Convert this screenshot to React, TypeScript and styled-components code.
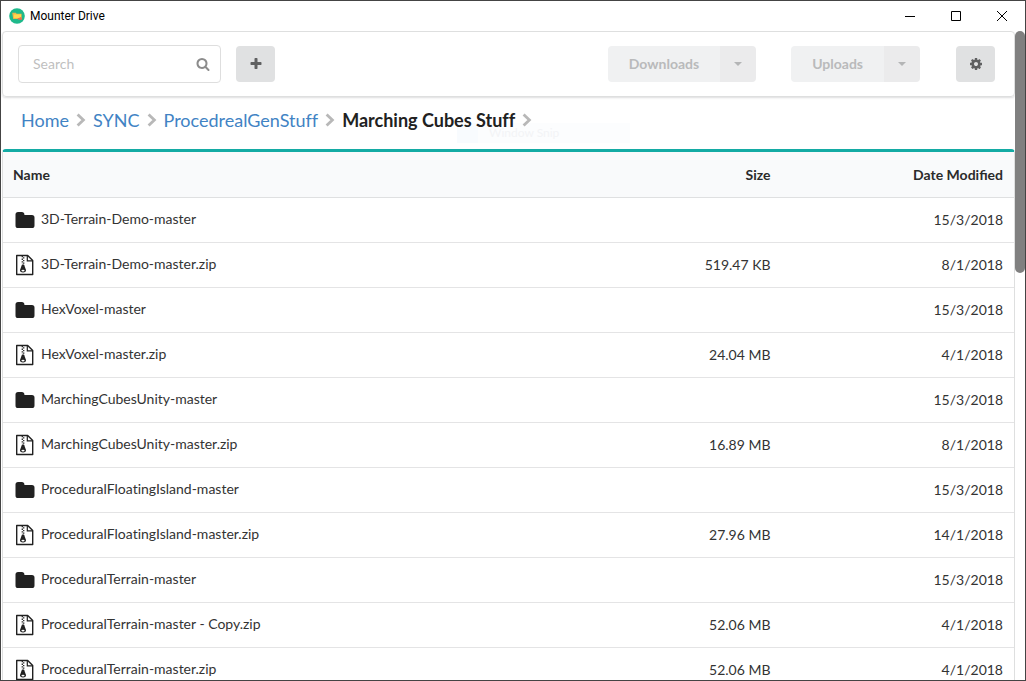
import React from "react";
import styled, { createGlobalStyle } from "styled-components";

const GlobalStyle = createGlobalStyle`
  *, *::before, *::after { box-sizing: border-box; }
  body {
    margin: 0;
    background: #fff;
    color: #212121;
    font-family: Lato, "Helvetica Neue", Arial, sans-serif;
    font-size: 14px;
    line-height: 18px;
  }
  button, input { font: inherit; }
`;

const Window = styled.div`
  display: flex;
  flex-direction: column;
  height: 100vh;
  border: 1px solid #444;
  overflow: hidden;
`;

const TitleBar = styled.header`
  display: flex;
  align-items: center;
  flex: none;
  height: 30px;
  padding-left: 8px;
  gap: 5px;
  color: #000;
`;

const WindowTitle = styled.h1`
  flex: 1;
  margin: 0;
  font: 400 12px/16px Roboto, "Open Sans", sans-serif;
`;

const WindowControls = styled.div`
  display: flex;
`;

const WindowButton = styled.button`
  display: flex;
  align-items: center;
  justify-content: center;
  width: 46px;
  height: 30px;
  padding: 0;
  border: 0;
  background: none;
  color: #000;
`;

const Viewport = styled.div`
  display: flex;
  flex: 1;
  min-height: 0;
`;

const Content = styled.main`
  flex: 1;
  min-width: 0;
  padding-left: 1px;
  overflow: hidden;
`;

const ScrollTrack = styled.div`
  flex: none;
  width: 10px;
`;

const ScrollThumb = styled.div`
  height: 242px;
  border-radius: 5px;
  background: #808080;
`;

const Toolbar = styled.div`
  display: flex;
  align-items: center;
  height: 66px;
  padding: 0 19px 0 15px;
  border: 1px solid #dedfdf;
  border-radius: 4px;
  box-shadow: 0 1px 2px rgba(34, 36, 38, 0.15);
`;

const SearchBox = styled.label`
  display: flex;
  align-items: center;
  width: 203px;
  height: 38px;
  margin-right: 15px;
  padding: 0 10px 0 14px;
  border: 1px solid #dedede;
  border-radius: 4px;
  color: #8c8c8c;
`;

const SearchInput = styled.input`
  flex: 1;
  min-width: 0;
  padding: 0;
  border: 0;
  outline: 0;
  background: none;
  color: #212121;
  &::placeholder { color: #bfbfbf; opacity: 1; }
`;

const IconButton = styled.button`
  display: flex;
  align-items: center;
  justify-content: center;
  width: 39px;
  height: 36px;
  padding: 0;
  border: 0;
  border-radius: 4px;
  background: #e0e1e2;
  color: #5f6061;
`;

const Transfers = styled.div`
  display: flex;
  gap: 35px;
  margin: 0 36px 0 auto;
`;

const SplitButton = styled.div`
  display: flex;
  height: 36px;
  border-radius: 4px;
  overflow: hidden;
`;

const SplitMain = styled.button`
  padding: 0 21px;
  border: 0;
  background: #f0f1f2;
  color: #b9babb;
  font-weight: 700;
`;

const SplitArrow = styled.button`
  display: flex;
  align-items: center;
  justify-content: center;
  width: 36px;
  padding: 0;
  border: 0;
  background: #ebebec;
  color: #b4b5b6;
`;

const Breadcrumb = styled.nav`
  position: relative;
  isolation: isolate;
  display: flex;
  align-items: center;
  height: 52px;
  padding: 0 19px 6px;
  gap: 7px;
  font-size: 18px;
  font-variant-ligatures: none;
  line-height: 24px;
  color: #212121;
`;

const Crumb = styled.a`
  color: #4183c4;
  text-decoration: none;
`;

const CurrentCrumb = styled.span`
  font-weight: 700;
`;

const SnipGhost = styled.div`
  position: absolute;
  z-index: -1;
  top: 26px;
  left: 455px;
  display: flex;
  align-items: center;
  width: 173px;
  height: 20px;
  background: #fcfdfe;
  color: #f3f4f6;
  font-size: 12px;
  line-height: 20px;
  &::before {
    content: "";
    width: 21px;
    height: 20px;
    margin-right: 11px;
    background: #f8fbfe;
  }
`;

const FileTable = styled.table`
  width: 100%;
  table-layout: fixed;
  border: 1px solid #dedfdf;
  border-top: 3px solid #14aba4;
  border-radius: 4px 4px 0 0;
  border-collapse: separate;
  border-spacing: 0;
`;

const HeadCell = styled.th<{ $width?: string; $right?: boolean }>`
  width: ${(p) => p.$width ?? "auto"};
  height: 46px;
  padding: 0 11px 0 10px;
  border-bottom: 1px solid #dfe0e1;
  background: #f9fafb;
  color: #2b2b2b;
  font-weight: 700;
  text-align: ${(p) => (p.$right ? "right" : "left")};
`;

const Cell = styled.td<{ $right?: boolean }>`
  height: 45px;
  padding: 0 11px 0 12px;
  border-bottom: 1px solid #e4e4e5;
  color: #333;
  font-variant-ligatures: none;
  text-align: ${(p) => (p.$right ? "right" : "left")};
`;

const FileName = styled.div`
  display: flex;
  align-items: center;
  gap: 6px;
`;

const FileLabel = styled.span`
  padding-bottom: 2px;
`;

const paths = {
  search:
    "M1216 832q0-185-131.5-316.5t-316.5-131.5-316.5 131.5-131.5 316.5 131.5 316.5 316.5 131.5 316.5-131.5 131.5-316.5zm512 832q0 52-38 90t-90 38q-54 0-90-38l-343-342q-179 124-399 124-143 0-273.5-55.5t-225-150-150-225-55.5-273.5 55.5-273.5 150-225 225-150 273.5-55.5 273.5 55.5 225 150 150 225 55.5 273.5q0 220-124 399l343 343q37 37 37 90z",
  plus:
    "M1600 736v192q0 40-28 68t-68 28h-416v416q0 40-28 68t-68 28h-192q-40 0-68-28t-28-68v-416h-416q-40 0-68-28t-28-68v-192q0-40 28-68t68-28h416v-416q0-40 28-68t68-28h192q40 0 68 28t28 68v416h416q40 0 68 28t28 68z",
  cog:
    "M1152 896q0-106-75-181t-181-75-181 75-75 181 75 181 181 75 181-75 75-181zm512-109v222q0 12-8 23t-20 13l-185 28q-19 54-39 91 35 50 107 138 10 12 10 25t-9 23q-27 37-99 108t-94 71q-12 0-26-9l-138-108q-44 23-91 38-16 136-29 186-7 28-36 28h-222q-14 0-24.5-8.5t-11.5-21.5l-28-184q-49-16-90-37l-141 107q-10 9-25 9-14 0-25-11-126-114-165-168-7-10-7-23 0-12 8-23 15-21 51-66.5t54-70.5q-27-50-41-99l-183-27q-13-2-21-12.5t-8-23.5v-222q0-12 8-23t19-13l186-28q14-46 39-92-40-57-107-138-10-12-10-24 0-10 9-23 26-36 98.5-107.5t94.5-71.5q13 0 26 10l138 107q44-23 91-38 16-136 29-186 7-28 36-28h222q14 0 24.5 8.5t11.5 21.5l28 184q49 16 90 37l142-107q9-9 24-9 13 0 25 10 129 119 165 170 7 8 7 22 0 12-8 23-15 21-51 66.5t-54 70.5q26 50 41 98l183 28q13 2 21 12.5t8 23.5z",
};

const Glyph = ({ name, size }: { name: keyof typeof paths; size: number }) => (
  <svg width={size} height={size} viewBox="0 0 1792 1792" fill="currentColor" aria-hidden="true">
    <path d={paths[name]} />
  </svg>
);

const Chevron = () => (
  <svg width="10" height="14" viewBox="0 0 10 14" fill="none" stroke="#b8b8b8" strokeWidth="2.8" aria-hidden="true">
    <path d="M1.600 1.400 7.400 7l-5.800 5.600" />
  </svg>
);

const Caret = () => (
  <svg width="8" height="4" viewBox="0 0 8 4" fill="currentColor" aria-hidden="true">
    <path d="M0 0h8L4 4z" />
  </svg>
);

const FolderIcon = () => (
  <svg width="20" height="18" viewBox="0 0 20 18" fill="#212121" aria-hidden="true">
    <path d="M.5 3.600A2.600 2.600 0 0 1 3.100 1h3.700a2.600 2.600 0 0 1 2.600 2.600V4h7.500a2.600 2.600 0 0 1 2.600 2.600v7.800a2.600 2.600 0 0 1-2.600 2.600H3.100a2.600 2.600 0 0 1-2.600-2.600z" />
  </svg>
);

const ZipIcon = () => (
  <svg width="20" height="22" viewBox="0 0 20 22" fill="none" stroke="#212121" aria-hidden="true">
    <path strokeWidth="1.400" strokeLinejoin="round" d="M1.700 1.500h11l5 5v14h-16z" />
    <path strokeWidth="1.200" d="M12.300 1.700v5.100h5.200" />
    <path strokeWidth="1.300" strokeDasharray="1.300 1.300" d="M7.300 2v8M8.700 3.300v8" />
    <path fill="#212121" stroke="none" d="M7 10.500h2l1.900 5.300c.6 1.700-1 2.800-2.900 2.800s-3.500-1.100-2.900-2.800z" />
    <ellipse cx="8" cy="16.600" rx="1.600" ry=".9" fill="#fff" stroke="none" />
  </svg>
);

const AppLogo = () => (
  <svg width="16" height="16" viewBox="0 0 16 16" aria-hidden="true">
    <circle cx="8" cy="8" r="7.800" fill="#1eb98b" />
    <path d="M3.200 4.800h3.600l.8.900h5v5.300H4.200z" fill="#f3b448" />
    <path d="M4.800 6.400h7.200v3.600H4.800z" fill="#ffd84f" />
    <path d="M8.500 10h2.200V8.800L13 10v1.800H9.500z" fill="#ec6f50" />
  </svg>
);

const crumbs = ["Home", "SYNC", "ProcedrealGenStuff"];

const files = [
  { name: "3D-Terrain-Demo-master", size: "", date: "15/3/2018" },
  { name: "3D-Terrain-Demo-master.zip", size: "519.47 KB", date: "8/1/2018" },
  { name: "HexVoxel-master", size: "", date: "15/3/2018" },
  { name: "HexVoxel-master.zip", size: "24.04 MB", date: "4/1/2018" },
  { name: "MarchingCubesUnity-master", size: "", date: "15/3/2018" },
  { name: "MarchingCubesUnity-master.zip", size: "16.89 MB", date: "8/1/2018" },
  { name: "ProceduralFloatingIsland-master", size: "", date: "15/3/2018" },
  { name: "ProceduralFloatingIsland-master.zip", size: "27.96 MB", date: "14/1/2018" },
  { name: "ProceduralTerrain-master", size: "", date: "15/3/2018" },
  { name: "ProceduralTerrain-master - Copy.zip", size: "52.06 MB", date: "4/1/2018" },
  { name: "ProceduralTerrain-master.zip", size: "52.06 MB", date: "4/1/2018" },
];

const TransferButton = ({ label }: { label: string }) => (
  <SplitButton>
    <SplitMain disabled>{label}</SplitMain>
    <SplitArrow disabled aria-label={`${label} menu`}>
      <Caret />
    </SplitArrow>
  </SplitButton>
);

export default function App() {
  return (
    <>
      <GlobalStyle />
      <Window>
        <TitleBar>
          <AppLogo />
          <WindowTitle>Mounter Drive</WindowTitle>
          <WindowControls>
            <WindowButton aria-label="Minimize">
              <svg width="10" height="10" viewBox="0 0 10 10" stroke="currentColor">
                <path d="M0 5.500h10" />
              </svg>
            </WindowButton>
            <WindowButton aria-label="Maximize">
              <svg width="10" height="10" viewBox="0 0 10 10" fill="none" stroke="currentColor">
                <path d="M.5.5h9v9h-9z" />
              </svg>
            </WindowButton>
            <WindowButton aria-label="Close">
              <svg width="10" height="10" viewBox="0 0 10 10" stroke="currentColor">
                <path d="m0 0 10 10M10 0 0 10" />
              </svg>
            </WindowButton>
          </WindowControls>
        </TitleBar>
        <Viewport>
          <Content>
            <Toolbar>
              <SearchBox>
                <SearchInput type="text" placeholder="Search" aria-label="Search" />
                <Glyph name="search" size={14} />
              </SearchBox>
              <IconButton aria-label="Add">
                <Glyph name="plus" size={14} />
              </IconButton>
              <Transfers>
                <TransferButton label="Downloads" />
                <TransferButton label="Uploads" />
              </Transfers>
              <IconButton aria-label="Settings">
                <Glyph name="cog" size={14} />
              </IconButton>
            </Toolbar>
            <Breadcrumb aria-label="Folder path">
              <SnipGhost aria-hidden="true">Window Snip</SnipGhost>
              {crumbs.map((crumb) => (
                <React.Fragment key={crumb}>
                  <Crumb href="#">{crumb}</Crumb>
                  <Chevron />
                </React.Fragment>
              ))}
              <CurrentCrumb>Marching Cubes Stuff</CurrentCrumb>
              <Chevron />
            </Breadcrumb>
            <FileTable>
              <thead>
                <tr>
                  <HeadCell>Name</HeadCell>
                  <HeadCell $width="23%" $right>Size</HeadCell>
                  <HeadCell $width="23%" $right>Date Modified</HeadCell>
                </tr>
              </thead>
              <tbody>
                {files.map((file) => (
                  <tr key={file.name}>
                    <Cell>
                      <FileName>
                        {file.name.endsWith(".zip") ? <ZipIcon /> : <FolderIcon />}
                        <FileLabel>{file.name}</FileLabel>
                      </FileName>
                    </Cell>
                    <Cell $right>{file.size}</Cell>
                    <Cell $right>{file.date}</Cell>
                  </tr>
                ))}
              </tbody>
            </FileTable>
          </Content>
          <ScrollTrack>
            <ScrollThumb />
          </ScrollTrack>
        </Viewport>
      </Window>
    </>
  );
}
